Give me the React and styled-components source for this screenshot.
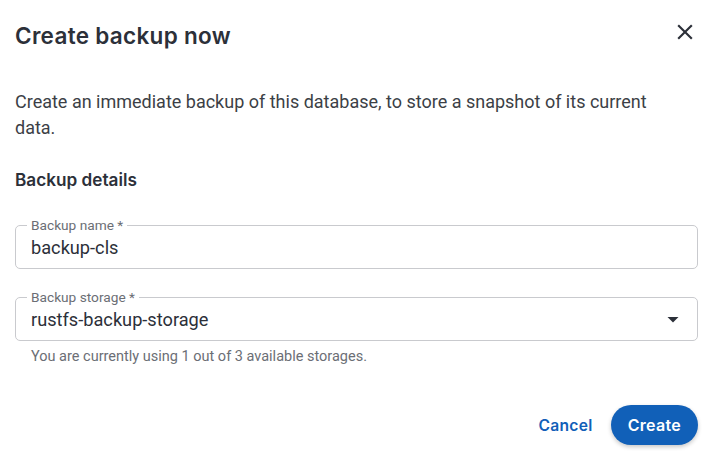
import React from 'react';
import styled, { createGlobalStyle } from 'styled-components';

const GlobalStyle = createGlobalStyle`
    html, body {
        margin: 0;
        padding: 0;
        background: #ffffff;
    }
    * {
        box-sizing: border-box;
    }
`;

const Dialog = styled.div`
    width: 715px;
    height: 463px;
    background: #ffffff;
    padding: 0 17px 0 15px;
    display: flex;
    flex-direction: column;
    font-family: Roboto, "Liberation Sans", sans-serif;
`;

const Header = styled.div`
    display: flex;
    justify-content: space-between;
    align-items: center;
    height: 70px;
`;

const Title = styled.h2`
    margin: 0;
    font-family: Inter, "DejaVu Sans", sans-serif;
    font-size: 22.5px;
    font-weight: 600;
    letter-spacing: 0.3px;
    color: #2c3039;
`;

const CloseButton = styled.button`
    border: none;
    background: transparent;
    padding: 0;
    width: 26px;
    height: 26px;
    margin: -7px 0 0 0;
    display: flex;
    align-items: center;
    justify-content: center;
    color: #2c3039;
    cursor: pointer;
`;

const Description = styled.p`
    margin: 19px 0 0;
    max-width: 640px;
    font-size: 18px;
    line-height: 26px;
    color: #3c3f46;
`;

const SectionTitle = styled.h3`
    margin: 28px 0 0;
    font-family: Inter, "DejaVu Sans", sans-serif;
    font-size: 17.2px;
    line-height: 22px;
    font-weight: 600;
    color: #2c3039;
`;

const Fields = styled.div`
    display: flex;
    flex-direction: column;
    gap: 28px;
    margin-top: 34px;
`;

const FieldWrap = styled.div`
    display: flex;
    flex-direction: column;
`;

const Box = styled.div`
    position: relative;
    height: 44px;
    border: 1px solid #c9cace;
    border-radius: 5px;
    display: flex;
    align-items: center;
    padding: 0 16px 0 15px;
`;

const Label = styled.span`
    position: absolute;
    left: 11px;
    top: -9px;
    padding: 0 4px 0 4px;
    background: #ffffff;
    font-size: 13.7px;
    line-height: 16px;
    color: #6b6e75;
`;

const Value = styled.span`
    flex: 1;
    font-size: 18.2px;
    color: #2c3039;
`;

const Helper = styled.span`
    margin: 8px 0 0 16px;
    font-size: 14.5px;
    line-height: 16px;
    color: #6b6e75;
`;

const Footer = styled.div`
    margin-top: auto;
    margin-bottom: 18px;
    display: flex;
    justify-content: flex-end;
    align-items: center;
    gap: 18px;
`;

const Button = styled.button`
    font-family: Inter, "DejaVu Sans", sans-serif;
    font-size: ${p => (p.primary ? '16px' : '15.6px')};
    font-weight: 600;
    letter-spacing: 0.3px;
    border: none;
    border-radius: 20px;
    height: 40px;
    padding: 0 ${p => (p.primary ? '17px' : '0')};
    cursor: pointer;
    color: ${p => (p.primary ? '#ffffff' : '#1160b8')};
    background: ${p => (p.primary ? '#1160b8' : 'transparent')};
    box-shadow: ${p => (p.primary ? '0 2px 4px rgba(0, 0, 0, 0.22)' : 'none')};
`;

function Field({ label, value, select, helper }) {
    return (
        <FieldWrap>
            <Box>
                <Label>{label}</Label>
                <Value>{value}</Value>
                {select && (
                    <svg width="24" height="24" viewBox="0 0 24 24" style={{ marginRight: -4 }}>
                        <path d="M6.5 10l5.5 5.5 5.5-5.5z" fill="#2c3039" />
                    </svg>
                )}
            </Box>
            {helper && <Helper>{helper}</Helper>}
        </FieldWrap>
    );
}

export default function App() {
    return (
        <>
            <GlobalStyle />
            <Dialog>
                <Header>
                    <Title>Create backup now</Title>
                    <CloseButton aria-label="close">
                        <svg width="26" height="26" viewBox="0 0 24 24">
                            <path
                                d="M19 6.41 17.59 5 12 10.59 6.41 5 5 6.41 10.59 12 5 17.59 6.41 19 12 13.41 17.59 19 19 17.59 13.41 12z"
                                fill="currentColor"
                            />
                        </svg>
                    </CloseButton>
                </Header>
                <Description>
                    Create an immediate backup of this database, to store a snapshot of its current data.
                </Description>
                <SectionTitle>Backup details</SectionTitle>
                <Fields>
                    <Field label="Backup name *" value="backup-cls" />
                    <Field
                        label="Backup storage *"
                        value="rustfs-backup-storage"
                        select
                        helper="You are currently using 1 out of 3 available storages."
                    />
                </Fields>
                <Footer>
                    <Button>Cancel</Button>
                    <Button primary>Create</Button>
                </Footer>
            </Dialog>
        </>
    );
}
